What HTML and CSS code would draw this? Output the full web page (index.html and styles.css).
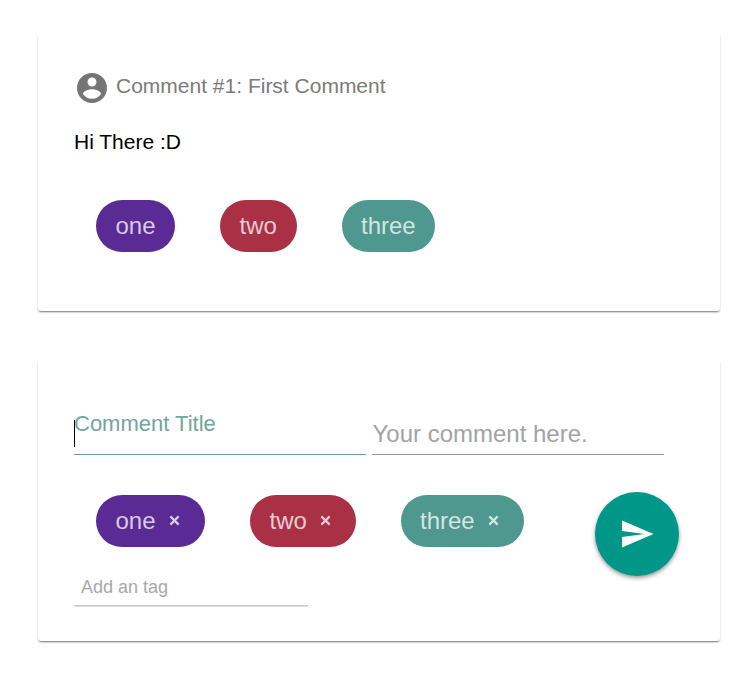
FILE: index.html
```html
<!DOCTYPE html>
<html lang="en">
<head>
<meta charset="utf-8">
<title>Comments</title>
<link rel="stylesheet" href="styles.css">
</head>
<body>
<article class="card">
  <header class="card-header">
    <svg class="avatar" viewBox="0 0 24 24"><path d="M12 2C6.480 2 2 6.480 2 12s4.480 10 10 10 10-4.480 10-10S17.520 2 12 2zm0 3c1.660 0 3 1.340 3 3s-1.340 3-3 3-3-1.340-3-3 1.340-3 3-3zm0 14.200c-2.500 0-4.710-1.280-6-3.220.030-1.990 4-3.080 6-3.080 1.990 0 5.970 1.090 6 3.080-1.290 1.940-3.500 3.220-6 3.220z"/></svg>
    <span>Comment #1: First Comment</span>
  </header>
  <p class="message">Hi There :D</p>
  <div class="chips">
    <span class="chip purple one">one</span>
    <span class="chip red two">two</span>
    <span class="chip teal three">three</span>
  </div>
</article>
<section class="card form">
  <div class="fields">
    <div class="field active"><span class="caret"></span>Comment Title</div>
    <div class="field">Your comment here.</div>
  </div>
  <div class="actions">
    <div>
      <div class="chips editable">
        <span class="chip purple e-one">one<svg viewBox="0 0 12 12"><path d="M1.500 1.500L10.500 10.500M10.500 1.500L1.500 10.500"/></svg></span>
        <span class="chip red e-two">two<svg viewBox="0 0 12 12"><path d="M1.500 1.500L10.500 10.500M10.500 1.500L1.500 10.500"/></svg></span>
        <span class="chip teal e-three">three<svg viewBox="0 0 12 12"><path d="M1.500 1.500L10.500 10.500M10.500 1.500L1.500 10.500"/></svg></span>
      </div>
      <div class="tag-input">Add an tag</div>
    </div>
    <button class="send" aria-label="Send"><svg viewBox="0 0 24 24"><path d="M2.010 21L23 12 2.010 3 2 10l15 2-15 2z"/></svg></button>
  </div>
</section>
</body>
</html>
```
FILE: styles.css
```css
* { box-sizing: border-box; }
body { margin: 0; min-height: 680px; padding: 34px 36px 0 38px; background: #fff; font-family: "Liberation Sans", Arial, sans-serif; }
.card { width: 682px; height: 277px; padding: 36px; background: #fff; border-radius: 3px; box-shadow: 0 2px 2px -1px rgba(0,0,0,.42), 0 1px 2px rgba(0,0,0,.2); }
.card-header { display: flex; align-items: center; height: 36px; font-size: 21px; line-height: 24px; color: #7b7b7b; }
.card-header span { margin: -4px 0 0 6px; white-space: nowrap; }
.avatar { width: 36px; height: 36px; fill: #757575; }
.message { margin: 24px 0 0; font-size: 21px; line-height: 24px; color: #000; }
.chips { display: flex; gap: 45px; margin: 46px 0 0 22px; }
.chip { display: flex; align-items: center; height: 52px; padding: 0 19px 0 19.5px; border-radius: 26px; font-size: 24px; line-height: 28px; color: rgba(255,255,255,.76); white-space: nowrap; }
.purple { background: #5b2b95; }
.red { background: #a93045; }
.teal { background: #4f988f; }
.one { width: 79px; }
.two { width: 77px; }
.three { width: 93px; padding-left: 19px; }
.form { height: 281px; margin-top: 49px; padding-top: 54px; }
.fields { display: flex; gap: 6px; }
.field { position: relative; width: 292px; height: 41px; padding: 6px 0 0 .5px; border-bottom: 1px solid #959595; color: #a3a3a3; font-size: 24px; line-height: 28px; }
.active { padding: 0; border-color: #6a9f99; color: #73a59f; font-size: 22px; line-height: 20px; }
.caret { position: absolute; left: 0; top: 6px; width: 1px; height: 27px; background: #000; }
.actions { display: flex; justify-content: space-between; }
.editable { margin-top: 40px; }
.chip svg { width: 11px; height: 11px; margin: -2px 0 0 13px; fill: none; stroke: currentColor; stroke-width: 2.4; }
.e-one { width: 109px; }
.e-two { width: 106px; }
.e-three { width: 123px; padding-left: 19px; }
.tag-input { width: 234px; height: 60px; padding: 28px 0 0 7px; border-bottom: 1px solid #dedede; box-shadow: inset 0 -1px #c9c9c9; font-size: 18px; line-height: 24px; color: #a8a8a8; }
.send { display: flex; align-items: center; justify-content: center; width: 84px; height: 84px; margin: 37px 5px 0 0; padding: 0; border: 0; border-radius: 50%; background: #009688; box-shadow: 0 2px 4px rgba(0,0,0,.42); }
.send svg { width: 36px; height: 36px; fill: #fff; }
```
